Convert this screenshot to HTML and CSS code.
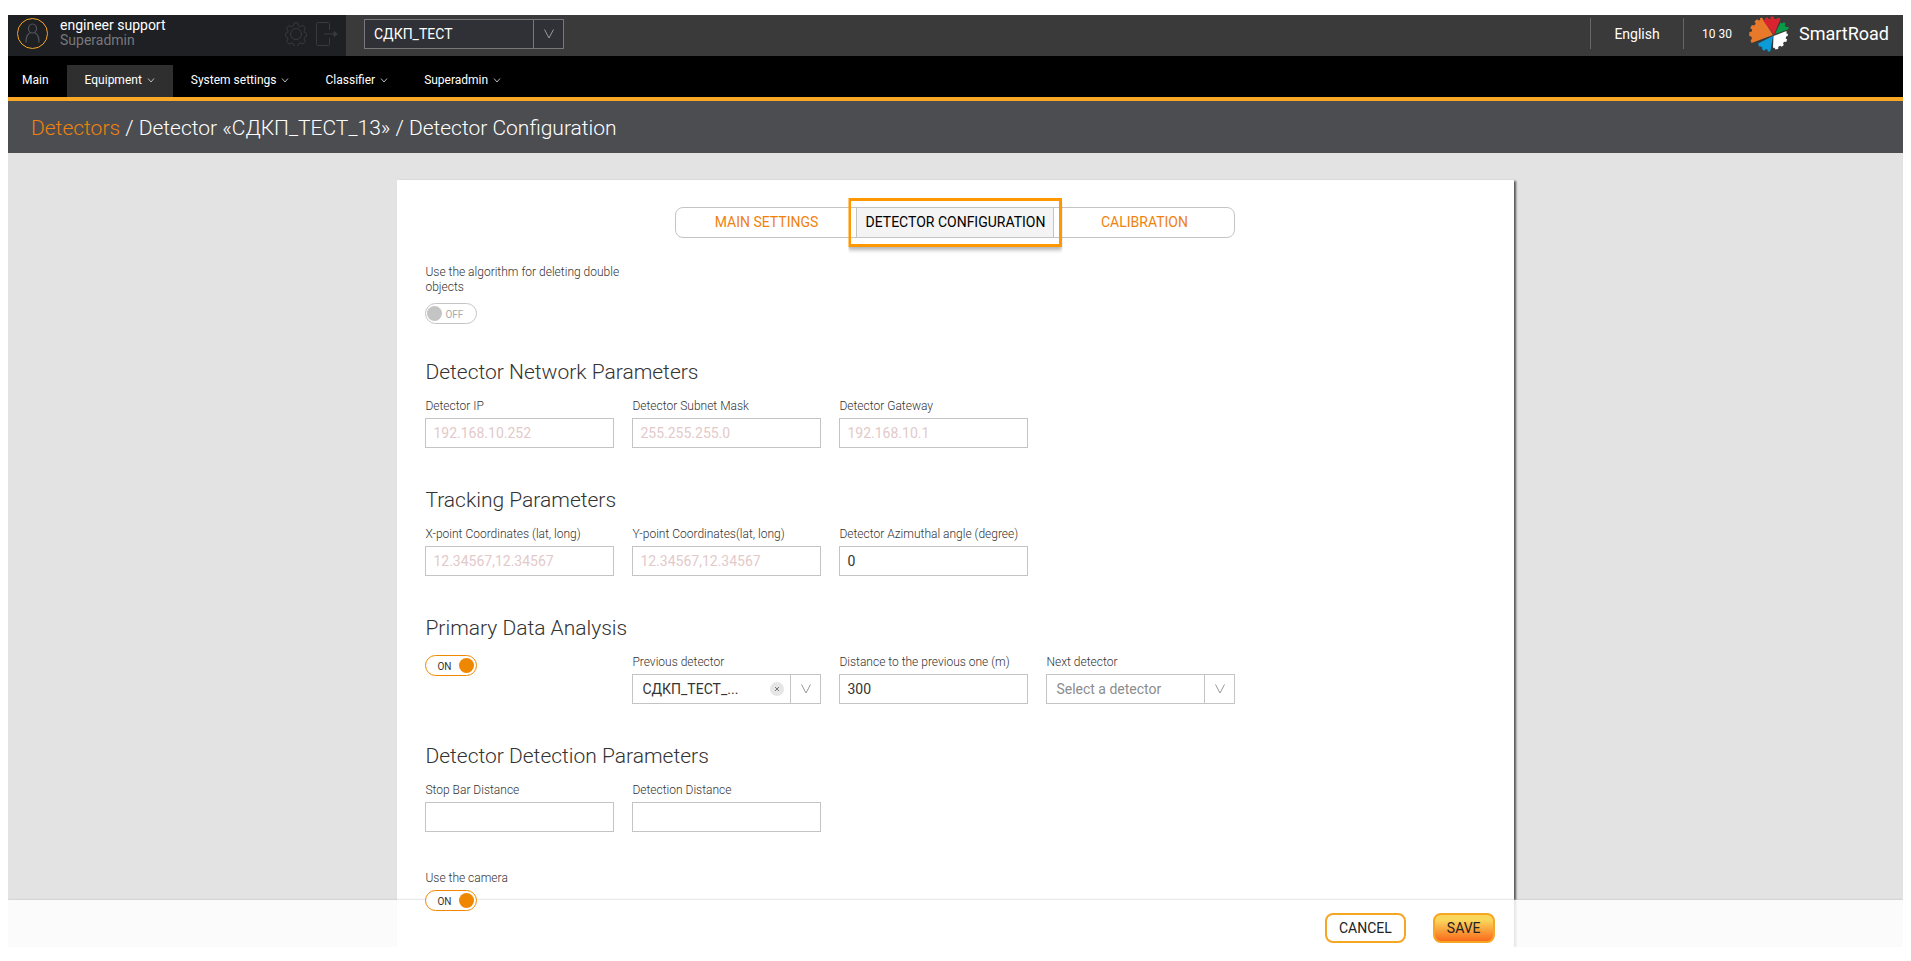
FILE: index.html
```html
<!DOCTYPE html>
<html lang="en">
<head>
<meta charset="utf-8">
<title>Detector Configuration</title>
<link rel="stylesheet" href="styles.css">
</head>
<body>
<div class="app">
  <header class="topbar">
    <div class="user">
      <svg class="avatar" viewBox="0 0 31 31" aria-hidden="true"><circle cx="15.500" cy="15.500" r="15" stroke="#f5a623"/><g stroke="#55565a" stroke-width="1.200"><ellipse cx="15.500" cy="10.500" rx="4" ry="4.500"/><path d="M9 24.500c0-6 2-9 4.500-10M22 24.500c0-6-2-9-4.500-10"/></g></svg>
      <div class="who"><span class="name">engineer support</span><span class="role">Superadmin</span></div>
      <button class="icon-btn" aria-label="Settings"><svg width="22" height="24" viewBox="0 0 22 24"><circle cx="11" cy="12" r="5.500"/><path d="M9.200 1h3.600l.7 2.800 1.800.9 2.700-1.300 2.300 2.700-1.300 2.500.6 1.900 2.100.9v2.600l-2.100 1-.6 1.900 1.200 2.600-2.200 2.500-2.700-1.100-1.800.9-.7 2.600H9.200l-.7-2.600-1.800-.9L4 22.100l-2.200-2.500L3 17l-.6-1.900-2-1v-2.600l2-.9L3 8.700 1.700 6.200 4 3.500l2.700 1.200 1.800-.9z"/></svg></button>
      <button class="icon-btn" aria-label="Log out"><svg width="22" height="24" viewBox="0 0 22 24"><path d="M13.500 8V1.500a1 1 0 0 0-1-1h-11a1 1 0 0 0-1 1v21a1 1 0 0 0 1 1h11a1 1 0 0 0 1-1V16M8 12h11"/><path class="tip" d="m18 9.500 3.500 2.500-3.500 2.500z"/></svg></button>
    </div>
    <div class="picker picker-dark">
      <select aria-label="Project"><option>СДКП_ТЕСТ</option></select>
      <span class="arrow"><svg width="12" height="12" viewBox="0 0 12 12"><path d="M1.500 1.500 6 10l4.500-8.500"/></svg></span>
    </div>
    <div class="right">
      <button class="lang">English</button>
      <time class="clock">10 30</time>
      <div class="brand">
        <svg class="logo" viewBox="0 0 40 36" aria-hidden="true">
          <path fill="#e8792b" d="M24 19 2.500 27l-1-3 1.500-1-.7-2.500L.2 20l.2-4 2.200-.2.600-2.300-2-1.300 1.700-3.300 2.300.6L6.700 7.700 5.500 5.500 8 3.300l2 1.300 1.200-.8-.3-1.600L13 1.500z"/>
          <path fill="#d9232e" d="M25 19 14 4.500l2-.7.3-2 2.500-.6.700 1.800h2L21.700.5h3l.5 2.200 2.300.3.900-1.600 3.100 1.300z"/>
          <path fill="#0a9b48" d="m26 18 5.500-11.500 1.500.9 2-1.200 1.500 1.500-.7 2 1.200 1.300 2-.3.900 1.800-1.300 1z"/>
          <path fill="#fff" d="m24.500 20 13-5v2.500l1.500.5-.3 2-1.600.4-.4 2 1.500 1-1 2.500-2-.2-1.200 1.600.8 1.700-2 1.700-1.500-1-2 1.100v2l-2.700.8-1.100-1.800-1.500-.1z"/>
          <path fill="#0a9bd8" d="m24 20-2.700 15.500h-2.500l-.3-2-2-.2-1.200 1.400-2.200-1.200.2-1.800-1.300-1.200-1.800.3-1.200-3.300z"/>
        </svg>
        <span>SmartRoad</span>
      </div>
    </div>
  </header>

  <nav class="menu">
    <a href="#">Main</a>
    <a href="#" class="active">Equipment<svg viewBox="0 0 8 8"><path d="m1 2.500 3 3.500 3-3.500"/></svg></a>
    <a href="#">System settings<svg viewBox="0 0 8 8"><path d="m1 2.500 3 3.500 3-3.500"/></svg></a>
    <a href="#">Classifier<svg viewBox="0 0 8 8"><path d="m1 2.500 3 3.500 3-3.500"/></svg></a>
    <a href="#">Superadmin<svg viewBox="0 0 8 8"><path d="m1 2.500 3 3.500 3-3.500"/></svg></a>
  </nav>

  <h1 class="crumbs"><a href="#">Detectors</a> / Detector «СДКП_ТЕСТ_13» / Detector Configuration</h1>

  <main class="stage">
    <form class="card">
      <div class="tabs">
        <button type="button">MAIN SETTINGS</button>
        <button type="button" class="current">DETECTOR CONFIGURATION</button>
        <button type="button">CALIBRATION</button>
      </div>

      <section class="first">
        <div class="field">
          <label for="dup">Use the algorithm for deleting double objects</label>
          <span class="toggle"><input type="checkbox" id="dup"><span class="state">OFF</span></span>
        </div>
      </section>

      <section>
        <h2>Detector Network Parameters</h2>
        <div class="grid">
          <div class="field"><label for="ip">Detector IP</label><input class="text" id="ip" placeholder="192.168.10.252"></div>
          <div class="field"><label for="mask">Detector Subnet Mask</label><input class="text" id="mask" placeholder="255.255.255.0"></div>
          <div class="field"><label for="gw">Detector Gateway</label><input class="text" id="gw" placeholder="192.168.10.1"></div>
        </div>
      </section>

      <section>
        <h2>Tracking Parameters</h2>
        <div class="grid">
          <div class="field"><label for="xp">X-point Coordinates (lat, long)</label><input class="text" id="xp" placeholder="12.34567,12.34567"></div>
          <div class="field"><label for="yp">Y-point Coordinates(lat, long)</label><input class="text" id="yp" placeholder="12.34567,12.34567"></div>
          <div class="field"><label for="az">Detector Azimuthal angle (degree)</label><input class="text" id="az" value="0"></div>
        </div>
      </section>

      <section>
        <h2>Primary Data Analysis</h2>
        <div class="grid">
          <div class="field"><span class="toggle"><input type="checkbox" aria-label="Primary Data Analysis" checked><span class="state">ON</span></span></div>
          <div class="field"><label for="prev">Previous detector</label>
            <div class="picker">
              <select id="prev"><option>СДКП_ТЕСТ_...</option></select>
              <button type="button" class="clear" aria-label="Clear"><svg width="6" height="6" viewBox="0 0 6 6"><path d="m1 1 4 4M5 1 1 5"/></svg></button>
              <span class="arrow"><svg width="12" height="12" viewBox="0 0 12 12"><path d="M1.500 1.500 6 10l4.500-8.500"/></svg></span>
            </div>
          </div>
          <div class="field"><label for="dist">Distance to the previous one (m)</label><input class="text" id="dist" value="300"></div>
          <div class="field"><label for="next">Next detector</label>
            <div class="picker empty">
              <select id="next"><option>Select a detector</option></select>
              <span class="arrow"><svg width="12" height="12" viewBox="0 0 12 12"><path d="M1.500 1.500 6 10l4.500-8.500"/></svg></span>
            </div>
          </div>
        </div>
      </section>

      <section>
        <h2>Detector Detection Parameters</h2>
        <div class="grid">
          <div class="field"><label for="stop">Stop Bar Distance</label><input class="text" id="stop"></div>
          <div class="field"><label for="det">Detection Distance</label><input class="text" id="det"></div>
        </div>
      </section>

      <section class="grid">
        <div class="field">
          <label for="cam">Use the camera</label>
          <span class="toggle raised"><input type="checkbox" id="cam" checked><span class="state">ON</span></span>
        </div>
      </section>
    </form>
    <footer class="actions">
      <div class="inner">
        <button class="btn">CANCEL</button>
        <button class="btn primary">SAVE</button>
      </div>
    </footer>
  </main>
</div>
</body>
</html>
```
FILE: styles.css
```css
* { box-sizing: border-box; }
body {
  margin: 0;
  height: 100vh;
  padding: 15px 8px 14px;
  background: #fff;
  color: #333;
  font: 14px/16px Roboto, "Liberation Sans", sans-serif;
}
button, input, select { font: inherit; color: inherit; }
button { padding: 0; border: 0; background: none; }
a { color: inherit; text-decoration: none; }
svg { fill: none; display: block; }

.app { height: 100%; display: flex; flex-direction: column; }

/* Top bar */
.topbar { display: flex; align-items: center; flex: none; height: 41px; background: #393a39; color: #fff; }
.user { display: flex; align-items: center; width: 338px; height: 100%; padding: 0 8px 4px 9px; background: #1f2024; }
.avatar { width: 31px; height: 31px; }
.who { display: flex; flex-direction: column; flex: 1; margin-left: 12px; padding-bottom: 2px; line-height: 15px; }
.role { color: #77787b; }
.icon-btn { margin-left: 9px; }
.icon-btn svg { stroke: #393a3c; }
.icon-btn .tip { fill: #393a3c; }

.picker { position: relative; display: flex; height: 30px; border: 1px solid #c4c4c4; background: #fff; }
.picker select { flex: 1; min-width: 0; padding: 0 9px; border: 0; background: none; appearance: none; }
.picker .arrow { display: flex; align-items: center; justify-content: center; width: 30px; border-left: 1px solid #c4c4c4; pointer-events: none; }
.picker .arrow svg { stroke: #999; }
.picker.empty select { color: #8c8c8c; }
.picker-dark { width: 200px; margin-left: 18px; margin-bottom: 3px; border-color: #77787b; background: #303136; }
.picker-dark .arrow { border-color: #77787b; }
.clear { display: flex; align-items: center; justify-content: center; align-self: center; width: 14px; height: 14px; margin-right: 6px; border-radius: 50%; background: #e6e6e6; }
.clear svg { stroke: #777; }

.right { display: flex; align-items: center; margin-left: auto; padding-right: 14px; padding-bottom: 4px; }
.lang { width: 94px; height: 31px; border: solid #666; border-width: 0 1px; }
.clock { margin: 0 17px 0 18px; font-size: 12px; }
.brand { display: flex; align-items: center; gap: 10px; font-size: 18px; }
.logo { width: 40px; height: 36px; }

/* Menu */
.menu { display: flex; align-items: flex-end; flex: none; height: 45px; background: #000; border-bottom: 4px solid #f9a825; color: #fff; font-size: 12px; }
.menu a { display: flex; align-items: center; height: 32px; padding: 0 18px 2px; }
.menu a:first-child { padding-left: 14px; }
.menu .active { background: #2f2f2f; }
.menu svg { width: 8px; height: 8px; margin-left: 5px; stroke: #bbb; }

.crumbs { flex: none; margin: 0; padding: 14px 23px 12px; background: #4c4d51; color: #fff; font-size: 21px; line-height: 26px; font-weight: 300; }
.crumbs a { color: #ef820d; }

/* Form */
.stage { position: relative; flex: 1; min-height: 0; overflow: hidden; padding-top: 27px; background: #e3e3e3; }
.card { width: 58.9%; height: 100%; margin: 0 auto; padding: 27px 28px 0; background: #fff; box-shadow: 2px 1px 2px #555; }
.tabs { display: flex; width: 560px; height: 31px; margin: 0 auto; border: 1px solid #c4c4c4; border-radius: 8px; }
.tabs button { flex: 1; padding-bottom: 2px; color: #ef820d; }
.tabs .current { position: relative; flex: none; width: 198px; border: solid #c4c4c4; border-width: 0 1px; background: #f4f4f4; color: #000; }
.tabs .current::after { content: ""; position: absolute; inset: -10px -9px; border: 3px solid #ff9800; box-shadow: 0 3px 4px rgba(0, 0, 0, .3); clip-path: inset(0 0 -8px 0); }

section { margin-bottom: 39px; }
.first { width: 207px; margin-top: 27px; margin-bottom: 35px; }
.first label { margin-bottom: 8px; }
.grid { display: grid; grid-template-columns: repeat(4, 189px); column-gap: 18px; }
.field { display: flex; flex-direction: column; align-items: stretch; }
label { margin-bottom: 4px; font-size: 12px; line-height: 15px; font-weight: 300; }
h2 { margin: 0 0 14px; font-size: 21px; line-height: 26px; font-weight: 300; }
.text { width: 100%; height: 30px; padding: 0 7px; border: 1px solid #c4c4c4; border-radius: 0; background: #fff; }
.text::placeholder { color: #e3c9c9; opacity: 1; }

.toggle { position: relative; display: flex; width: 52px; height: 21px; }
.toggle input { appearance: none; width: 100%; height: 100%; margin: 0; border: 1px solid #c4c4c4; border-radius: 11px; background: #fff; }
.toggle input::before { content: ""; position: absolute; top: 3px; left: 2px; width: 15px; height: 15px; border-radius: 50%; background: #c4c4c4; }
.toggle input:checked { border-color: #ef8700; }
.toggle input:checked::before { left: 34px; background: #ef8700; }
.state { position: absolute; top: 4px; left: 20px; font-size: 10px; line-height: 15px; color: #aaa; pointer-events: none; }
.toggle input:checked + .state { left: 12px; color: #333; }
.raised { z-index: 2; }

.actions { position: absolute; z-index: 1; left: 0; right: 0; bottom: 0; height: 47px; background: rgba(255, 255, 255, .85); box-shadow: 0 0 2px #bbb; }
.inner { display: flex; justify-content: flex-end; gap: 27px; width: 58.9%; margin: 0 auto; padding: 13px 19px 0; }
.btn { height: 30px; padding: 0 12px; border: 2px solid #f5a623; border-radius: 8px; background: #fff; color: #222; }
.primary { background: linear-gradient(#fbd65c 20%, #f96a1b); }
```
